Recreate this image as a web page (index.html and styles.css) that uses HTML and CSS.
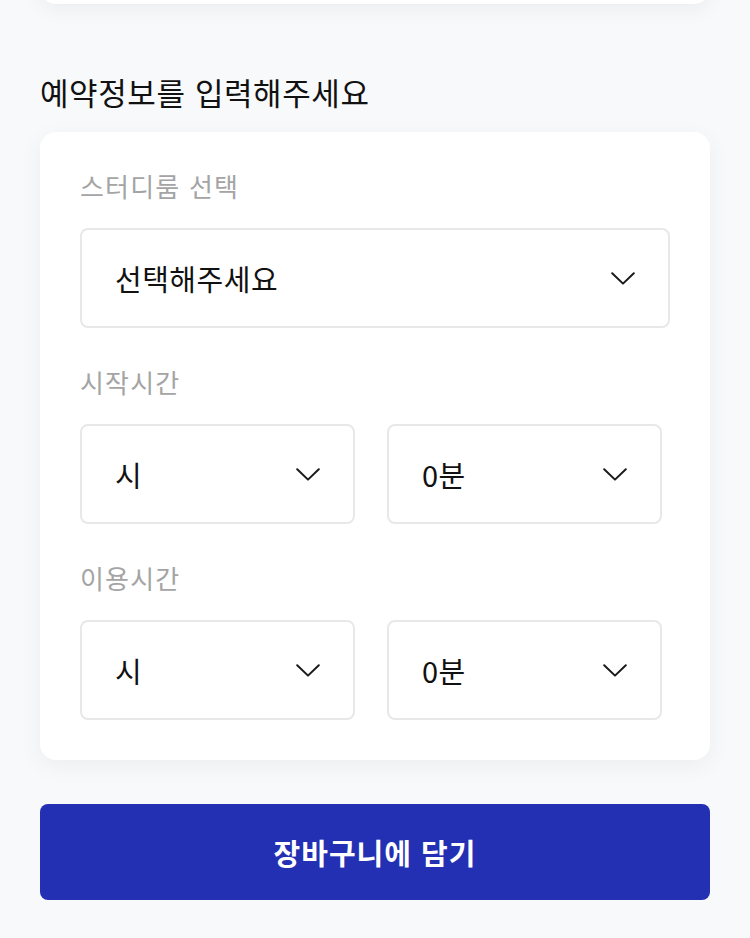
FILE: index.html
```html
<!DOCTYPE html>
<html lang="ko">
<head>
<meta charset="utf-8">
<link rel="stylesheet" href="styles.css">
</head>
<body>
<div class="page">
  <div class="prev-card"></div>
  <h2 class="title">예약정보를 입력해주세요</h2>
  <div class="card">
    <div class="field">
      <div class="label">스터디룸 선택</div>
      <div class="select wide"><span>선택해주세요</span><svg class="chev" viewBox="0 0 24 13"><path d="M1.2 1.2 L12 11.6 L22.8 1.2"/></svg></div>
    </div>
    <div class="field">
      <div class="label">시작시간</div>
      <div class="pair">
        <div class="select"><span>시</span><svg class="chev" viewBox="0 0 24 13"><path d="M1.2 1.2 L12 11.6 L22.8 1.2"/></svg></div>
        <div class="select"><span>0분</span><svg class="chev" viewBox="0 0 24 13"><path d="M1.2 1.2 L12 11.6 L22.8 1.2"/></svg></div>
      </div>
    </div>
    <div class="field">
      <div class="label">이용시간</div>
      <div class="pair">
        <div class="select"><span>시</span><svg class="chev" viewBox="0 0 24 13"><path d="M1.2 1.2 L12 11.6 L22.8 1.2"/></svg></div>
        <div class="select"><span>0분</span><svg class="chev" viewBox="0 0 24 13"><path d="M1.2 1.2 L12 11.6 L22.8 1.2"/></svg></div>
      </div>
    </div>
  </div>
  <button class="cta">장바구니에 담기</button>
</div>
</body>
</html>
```
FILE: styles.css
```css
html, body {
  margin: 0;
  padding: 0;
  background: #f8f9fb;
}
body {
  font-family: "Noto Sans CJK KR", "Noto Sans", sans-serif;
  color: #111;
  height: 938px;
  overflow: hidden;
}
.page {
  padding: 0 40px;
}
.prev-card {
  height: 40px;
  margin-top: -36px;
  background: #fff;
  border-radius: 0 0 16px 16px;
  box-shadow: 0 6px 20px rgba(0, 0, 0, 0.05);
}
.title {
  margin: 70px 0 22px;
  font-size: 31px;
  font-weight: 400;
  line-height: 36px;
  letter-spacing: 0.6px;
  color: #111;
}
.card {
  background: #fff;
  border-radius: 16px;
  padding: 36px 40px 40px;
  box-shadow: 0 6px 24px rgba(0, 0, 0, 0.05);
}
.field + .field {
  margin-top: 36px;
}
.label {
  font-size: 26px;
  line-height: 36px;
  color: #a4a4a4;
  margin-bottom: 24px;
  letter-spacing: 1.2px;
}
.select {
  box-sizing: border-box;
  height: 100px;
  border: 2px solid #e8e8e8;
  border-radius: 8px;
  display: flex;
  align-items: center;
  justify-content: space-between;
  padding: 0 33px 0 33px;
  font-size: 29px;
  color: #111;
  letter-spacing: 0.5px;
}
.pair {
  display: grid;
  grid-template-columns: 275px 275px;
  column-gap: 32px;
}
.chev {
  width: 24px;
  height: 13px;
  fill: none;
  stroke: #1a1a1a;
  stroke-width: 2;
  stroke-linecap: round;
  stroke-linejoin: round;
}
.cta {
  display: block;
  width: 100%;
  height: 96px;
  margin-top: 44px;
  border: none;
  border-radius: 8px;
  background: #2430b3;
  color: #fff;
  font-family: "Noto Sans CJK KR", "Noto Sans", sans-serif;
  font-size: 29px;
  font-weight: 700;
  letter-spacing: 1px;
}
```
